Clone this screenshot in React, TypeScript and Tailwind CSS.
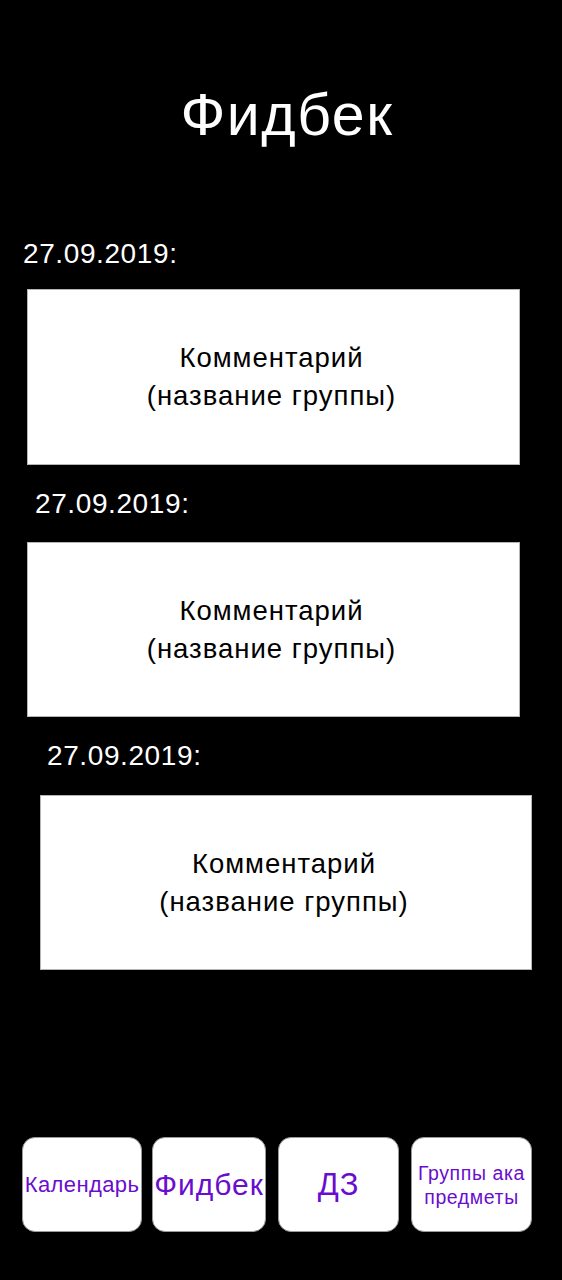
import React from "react";

function CommentBox({ className }: { className: string }) {
  return (
    <div className={className}>
      <span>Комментарий</span>
      <span>(название группы)</span>
    </div>
  );
}

export default function App() {
  return (
    <div className="w-[562px] min-h-[1280px] bg-black flex flex-col font-['Liberation_Sans',Arial,sans-serif]">
      <h1 className="pt-[86px] pl-[12px] text-center text-white text-[59px] leading-none font-normal tracking-[1.5px]">Фидбек</h1>

      <div className="mt-[95px] ml-[23px] text-white text-[28px] leading-none tracking-[0.6px]">27.09.2019:</div>
      <CommentBox className="mt-[21px] ml-[27px] w-[493px] h-[176px] bg-white border border-[#b5b5b5] flex flex-col items-center justify-center pr-[4px] text-black text-[27.5px] leading-[38px] tracking-[1px]" />

      <div className="mt-[25px] ml-[35px] text-white text-[28px] leading-none tracking-[0.6px]">27.09.2019:</div>
      <CommentBox className="mt-[24px] ml-[27px] w-[493px] h-[175px] bg-white border border-[#b5b5b5] flex flex-col items-center justify-center pr-[4px] text-black text-[27.5px] leading-[38px] tracking-[1px]" />

      <div className="mt-[25px] ml-[47px] text-white text-[28px] leading-none tracking-[0.6px]">27.09.2019:</div>
      <CommentBox className="mt-[25px] ml-[40px] w-[492px] h-[175px] bg-white border border-[#b5b5b5] flex flex-col items-center justify-center pr-[4px] text-black text-[27.5px] leading-[38px] tracking-[1px]" />

      <div className="mt-[167px] ml-[22px] flex h-[95px]">
        <div className="w-[120px] h-full bg-white rounded-[13px] border border-[#9a9a9a] flex items-center justify-center text-[#6a0dce] text-[22px] leading-none tracking-[0.4px]">Календарь</div>
        <div className="ml-[10px] w-[114px] h-full bg-white rounded-[13px] border border-[#9a9a9a] flex items-center justify-center text-[#6a0dce] text-[30px] leading-none tracking-[1px]">Фидбек</div>
        <div className="ml-[12px] w-[121px] h-full bg-white rounded-[13px] border border-[#9a9a9a] flex items-center justify-center text-[#6a0dce] text-[31px] leading-none tracking-[1px]">ДЗ</div>
        <div className="ml-[12px] w-[121px] h-full bg-white rounded-[13px] border border-[#9a9a9a] flex flex-col items-center justify-center text-[#6a0dce] text-[19.5px] leading-[24px] tracking-[0.6px] text-center">
          <span>Группы ака</span>
          <span>предметы</span>
        </div>
      </div>
    </div>
  );
}
